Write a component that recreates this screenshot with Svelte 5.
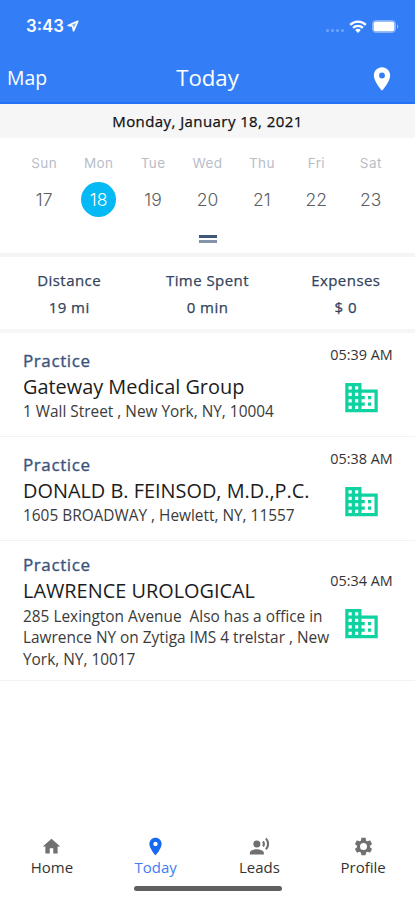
<script>
	const days = [
		{ name: "Sun", date: 17 },
		{ name: "Mon", date: 18 },
		{ name: "Tue", date: 19 },
		{ name: "Wed", date: 20 },
		{ name: "Thu", date: 21 },
		{ name: "Fri", date: 22 },
		{ name: "Sat", date: 23 }
	];

	const stats = [
		{ label: "Distance", value: "19 mi" },
		{ label: "Time Spent", value: "0 min" },
		{ label: "Expenses", value: "$ 0" }
	];

	const visits = [
		{ type: "Practice", name: "Gateway Medical Group", lines: ["1 Wall Street , New York, NY, 10004"], time: "05:39 AM", key: "gateway" },
		{ type: "Practice", name: "DONALD B. FEINSOD, M.D.,P.C.", lines: ["1605 BROADWAY , Hewlett, NY, 11557"], time: "05:38 AM", key: "feinsod" },
		{
			type: "Practice",
			name: "LAWRENCE UROLOGICAL",
			lines: ["285 Lexington Avenue  Also has a office in", "Lawrence NY on Zytiga IMS 4 trelstar , New", "York, NY, 10017"],
			time: "05:34 AM",
			key: "lawrence"
		}
	];

	const pin = "M12 2C8.13 2 5 5.13 5 9c0 5.25 7 13 7 13s7-7.75 7-13c0-3.87-3.13-7-7-7zm0 9.5a2.5 2.5 0 0 1 0-5 2.5 2.5 0 0 1 0 5z";

	const tabs = [
		{ label: "Home", icon: "M10 20v-6h4v6h5v-8h3L12 3 2 12h3v8z" },
		{ label: "Today", icon: pin },
		{
			label: "Leads",
			icon: "M9 5a4 4 0 1 0 0 8 4 4 0 0 0 0-8zM9 15c-2.67 0-8 1.34-8 4v2h16v-2c0-2.66-5.33-4-8-4zM16.76 5.36l-1.68 1.69c.84 1.18.84 2.71 0 3.89l1.68 1.69c2.02-2.02 2.02-5.07 0-7.27zM20.07 2l-1.63 1.63c2.77 3.02 2.77 7.56 0 10.74L20.07 16c3.9-3.89 3.91-9.95 0-14z"
		},
		{
			label: "Profile",
			icon: "M19.43 12.98c.04-.32.07-.64.07-.98s-.03-.66-.07-.98l2.11-1.65c.19-.15.24-.42.12-.64l-2-3.46c-.12-.22-.39-.3-.61-.22l-2.49 1c-.52-.4-1.08-.73-1.69-.98l-.38-2.65C14.46 2.18 14.25 2 14 2h-4c-.25 0-.46.18-.49.42l-.38 2.65c-.61.25-1.17.59-1.69.98l-2.49-1c-.23-.09-.49 0-.61.22l-2 3.46c-.13.22-.07.49.12.64l2.11 1.65c-.04.32-.07.65-.07.98s.03.66.07.98l-2.11 1.65c-.19.15-.24.42-.12.64l2 3.46c.12.22.39.3.61.22l2.49-1c.52.4 1.08.73 1.69.98l.38 2.65c.03.24.24.42.49.42h4c.25 0 .46-.18.49-.42l.38-2.65c.61-.25 1.17-.59 1.69-.98l2.49 1c.23.09.49 0 .61-.22l2-3.46c.12-.22.07-.49-.12-.64l-2.11-1.65zM12 16a4 4 0 1 1 0-8 4 4 0 0 1 0 8z"
		}
	];

	let selected = $state(18);
	let activeTab = $state("Today");
</script>

<div class="screen">
	<header>
		<div class="status">
			<span class="clock">3:43</span>
			<svg class="location" viewBox="0 0 12 12" aria-hidden="true">
				<path d="M10.8 1.2 1.2 5.5l4.5.8.8 4.5z" fill="#fff" fill-opacity=".35" stroke="#fff" stroke-width="1.6" stroke-linejoin="round" />
			</svg>
			<span class="signal"><i></i><i></i><i></i><i></i></span>
			<svg class="wifi" viewBox="0 0 18 13" aria-hidden="true">
				<g fill="none" stroke="#fff" stroke-width="2.4">
					<path d="M1.2 4.9a11 11 0 0 1 15.6 0" />
					<path d="M4.1 7.9a6.9 6.9 0 0 1 9.8 0" />
				</g>
				<path d="M9 13 6.2 10.1a4 4 0 0 1 5.6 0z" fill="#fff" />
			</svg>
			<svg class="battery" viewBox="0 0 27 13" aria-hidden="true">
				<rect x=".5" y=".5" width="23" height="12" rx="3.3" fill="none" stroke="#fff" stroke-opacity=".4" />
				<rect x="1.5" y="1.5" width="21" height="10" rx="2" fill="#fff" />
				<path d="M25 4.3c1.7.7 1.7 3.7 0 4.4z" fill="#fff" fill-opacity=".5" />
			</svg>
		</div>
		<div class="navbar">
			<span class="map">Map</span>
			<h1>Today</h1>
			<svg class="pin" viewBox="0 0 24 24" aria-hidden="true"><path d={pin} /></svg>
		</div>
	</header>

	<p class="date">Monday, January 18, 2021</p>

	<section class="calendar">
		<div class="week">
			{#each days as day}
				<button class:selected={selected === day.date} onclick={() => (selected = day.date)}>
					<span class="day">{day.name}</span>
					<span class="num">{day.date}</span>
				</button>
			{/each}
		</div>
		<div class="handle"></div>
	</section>

	<section class="stats">
		{#each stats as stat}
			<div><span>{stat.label}</span><span>{stat.value}</span></div>
		{/each}
	</section>

	<ul>
		{#each visits as visit}
			<li class={visit.key}>
				<div class="info">
					<p class="type">{visit.type}</p>
					<h2>{visit.name}</h2>
					<div class="address">
						{#each visit.lines as line}<p>{line}</p>{/each}
					</div>
				</div>
				<div class="side">
					<time>{visit.time}</time>
					<svg viewBox="0 0 24 24" aria-hidden="true">
						<path d="M12 7V3H2v18h20V7H12zM6 19H4v-2h2v2zm0-4H4v-2h2v2zm0-4H4V9h2v2zm0-4H4V5h2v2zm4 12H8v-2h2v2zm0-4H8v-2h2v2zm0-4H8V9h2v2zm0-4H8V5h2v2zm10 12h-8v-2h2v-2h-2v-2h2v-2h-2V9h8v10zm-2-8h-2v2h2v-2zm0 4h-2v2h2v-2z" />
					</svg>
				</div>
			</li>
		{/each}
	</ul>

	<nav>
		{#each tabs as tab}
			<button class:active={activeTab === tab.label} onclick={() => (activeTab = tab.label)}>
				<svg viewBox="0 0 24 24" aria-hidden="true"><path d={tab.icon} /></svg>
				<span>{tab.label}</span>
			</button>
		{/each}
	</nav>
	<div class="home-bar"></div>
</div>

<style>
	:global(body) { background: #fff; }

	.screen {
		display: flex;
		flex-direction: column;
		width: 415px;
		height: 900px;
		overflow: hidden;
		background: #fff;
		font-family: "Open Sans", "Noto Sans", sans-serif;
		color: #222;
	}

	p,
	h1,
	h2,
	ul {
		margin: 0;
		padding: 0;
		font-weight: 400;
	}

	button {
		padding: 0;
		border: 0;
		background: none;
		font: inherit;
		color: inherit;
	}

	svg { display: block; flex: none; }

	header {
		box-sizing: border-box;
		height: 104px;
		border-bottom: 2px solid #2371f4;
		background: #337ef7;
		color: #fff;
	}

	.status {
		display: flex;
		align-items: center;
		height: 52px;
		padding: 0 16px 0 26px;
	}

	.clock {
		font-family: Inter, sans-serif;
		font-size: 16.8px;
		font-weight: 600;
	}

	.location { width: 12px; height: 12px; margin-left: 3px; }

	.signal {
		display: flex;
		gap: 2px;
		margin: 8px 5px 0 auto;
	}

	.signal i {
		width: 3px;
		height: 3px;
		border-radius: 50%;
		background: rgba(255, 255, 255, 0.3);
	}

	.wifi { width: 18px; height: 13px; margin-right: 5px; }
	.battery { width: 27px; height: 13px; }

	.navbar {
		display: grid;
		grid-template-columns: 1fr auto 1fr;
		align-items: center;
		height: 50px;
		padding: 0 19px 0 7px;
	}

	.map { font-size: 19.4px; }

	h1 {
		padding: 2px 0 0 12px;
		font-size: 22.2px;
		line-height: 30px;
	}

	.pin {
		justify-self: end;
		width: 28px;
		height: 28px;
		margin-top: 4px;
		fill: #fff;
	}

	.date {
		height: 34px;
		background: #f6f6f6;
		color: #111;
		font-size: 15px;
		letter-spacing: 0.42px;
		line-height: 34px;
		text-align: center;
		-webkit-text-stroke: 0.25px;
	}

	.calendar {
		box-sizing: border-box;
		height: 119px;
		padding: 15px 17px 0;
		border-bottom: 4px solid #f4f5f5;
	}

	.week {
		display: grid;
		grid-template-columns: repeat(7, 1fr);
		font-family: Inter, sans-serif;
	}

	.week button {
		display: flex;
		flex-direction: column;
		align-items: center;
		gap: 9px;
	}

	.day {
		color: #b8bec8;
		font-size: 13.5px;
		letter-spacing: 0.4px;
		line-height: 20px;
	}

	.num {
		width: 35px;
		height: 35px;
		border-radius: 50%;
		color: #5a5e63;
		font-size: 17.5px;
		font-weight: 300;
		line-height: 35px;
	}

	.selected .num { background: #04b9f4; color: #fff; }

	.handle {
		box-sizing: border-box;
		width: 18px;
		height: 8px;
		margin: 18px auto 0;
		border: solid #40597a;
		border-width: 3px 0;
		border-bottom-color: #8494a8;
	}

	.stats {
		display: grid;
		grid-template-columns: repeat(3, 1fr);
		box-sizing: border-box;
		height: 76px;
		padding-top: 10px;
		border-bottom: 4px solid #f6f6f6;
		color: #33435c;
		font-size: 15px;
		letter-spacing: 0.45px;
		line-height: 27px;
		text-align: center;
		-webkit-text-stroke: 0.25px;
	}

	.stats div { display: flex; flex-direction: column; }

	ul { list-style: none; }

	li {
		display: flex;
		box-sizing: border-box;
		height: 104px;
		padding: 15px 22px 0 23px;
		border-bottom: 1px solid #f2f2f2;
	}

	.lawrence { height: 140px; padding-top: 11px; }

	.info { flex: 1; }

	.type {
		color: #3a547c;
		font-size: 17px;
		letter-spacing: 0.6px;
		line-height: 26px;
		-webkit-text-stroke: 0.35px;
	}

	h2 {
		color: #1c1c1c;
		font-size: 19.9px;
		line-height: 26px;
	}

	.address {
		padding-top: 1px;
		color: #3b3b3b;
		font-size: 15.4px;
		line-height: 21.3px;
	}

	.lawrence .address { padding-top: 2px; }

	.address p { white-space: pre; }

	.side {
		display: flex;
		flex: none;
		flex-direction: column;
		align-items: center;
		width: 63px;
		margin-left: -10px;
		color: #333;
		font-size: 14.4px;
		line-height: 20px;
		white-space: nowrap;
	}

	.side time { margin-top: -3px; }
	.side svg { width: 39px; height: 39px; margin-top: 13px; fill: #0ed3a0; }
	.lawrence .side { padding-top: 22px; }

	nav {
		display: grid;
		grid-template-columns: repeat(4, 1fr);
		margin-top: auto;
	}

	nav button {
		display: flex;
		flex-direction: column;
		align-items: center;
		color: #333;
		font-size: 15px;
		line-height: 20px;
	}

	nav svg { width: 21px; height: 21px; fill: #707070; }
	nav .active { color: #3f7df5; }
	nav .active svg { fill: #1769f2; }

	.home-bar {
		width: 148px;
		height: 5px;
		margin: 9px auto 9px;
		border-radius: 3px;
		background: #606060;
	}
</style>
